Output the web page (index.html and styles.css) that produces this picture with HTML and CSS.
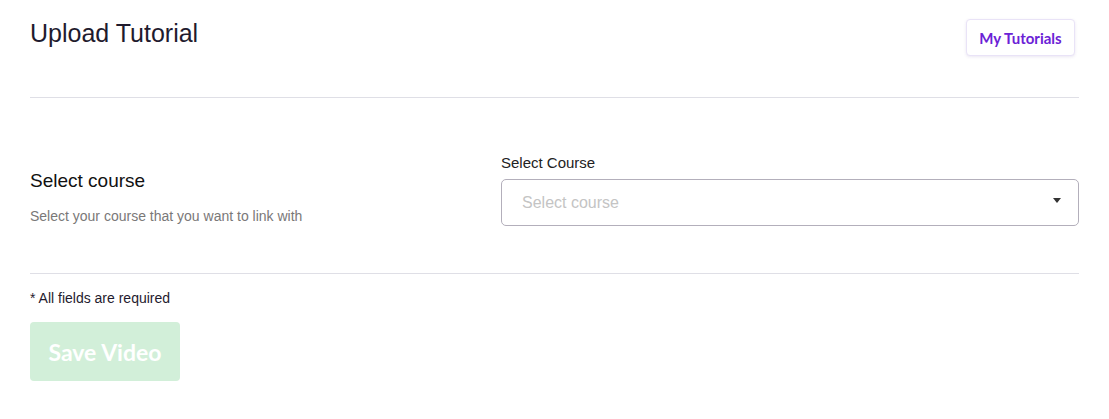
FILE: index.html
```html
<!DOCTYPE html>
<html lang="en">
<head>
    <meta charset="UTF-8">
    <meta name="viewport" content="width=device-width, initial-scale=1.0">
    <title>Upload Tutorial</title>
    <link rel="stylesheet" href="styles.css">
</head>
<body>
    <div class="page">
        <div class="header">
            <h1 class="title">Upload Tutorial</h1>
            <button class="btn-outline">My Tutorials</button>
        </div>

        <div class="row">
            <div class="row-info">
                <h3 class="row-title">Select course</h3>
                <p class="row-desc">Select your course that you want to link with</p>
            </div>
            <div class="row-field">
                <label class="field-label" for="course">Select Course</label>
                <div class="select">
                    <span class="placeholder">Select course</span>
                    <span class="caret"></span>
                </div>
            </div>
        </div>

        <div class="footer">
            <p class="note">* All fields are required</p>
            <button class="btn-save" disabled>Save Video</button>
        </div>
    </div>
</body>
</html>
```

FILE: styles.css
```css
* { box-sizing: border-box; }
body { margin: 0; font-family: "Liberation Sans", Arial, sans-serif; background: #fff; color: #1b1b2a; }
.page { padding: 0 30px; }

.header { display: flex; justify-content: space-between; align-items: flex-start; padding-top: 19px; height: 98px; border-bottom: 1px solid #dfdfe6; }
.title { margin: 0; font-size: 25px; font-weight: normal; line-height: 29px; color: #1f1b2e; }
.btn-outline { margin-right: 4px; width: 109px; height: 37px; background: #fff; border: 1px solid #e9e3f7; border-radius: 4px; box-shadow: 0 1px 3px rgba(90,60,160,0.12); font-family: Lato, sans-serif; font-weight: bold; font-size: 15px; color: #6b22d6; cursor: pointer; }

.row { display: flex; align-items: flex-start; padding: 56px 0 47px; border-bottom: 1px solid #dfdfe6; }
.row-info { width: 471px; padding-top: 16px; }
.row-title { margin: 0; font-size: 19px; font-weight: normal; line-height: 22px; color: #111; }
.row-desc { margin: 16px 0 0; font-size: 14px; line-height: 16px; color: #7a7878; }
.row-field { flex: 1; }
.field-label { display: block; font-size: 15px; line-height: 17px; color: #222; margin-bottom: 8px; }
.select { display: flex; align-items: center; justify-content: space-between; height: 47px; border: 1px solid #b3afbb; border-radius: 5px; padding: 0 17px 0 20px; }
.placeholder { font-size: 16px; color: #c4c4c4; padding-top: 1px; }
.caret { width: 0; height: 0; border-left: 4px solid transparent; border-right: 4px solid transparent; border-top: 5px solid #333; margin-top: -4px; }

.footer { padding-top: 16px; }
.note { margin: 0 0 16px; font-size: 14px; line-height: 16px; color: #1f1b2e; }
.btn-save { width: 150px; height: 59px; background: #d2efd9; border: none; border-radius: 4px; font-family: Lato, sans-serif; font-weight: bold; font-size: 23px; color: #fff; }
```
